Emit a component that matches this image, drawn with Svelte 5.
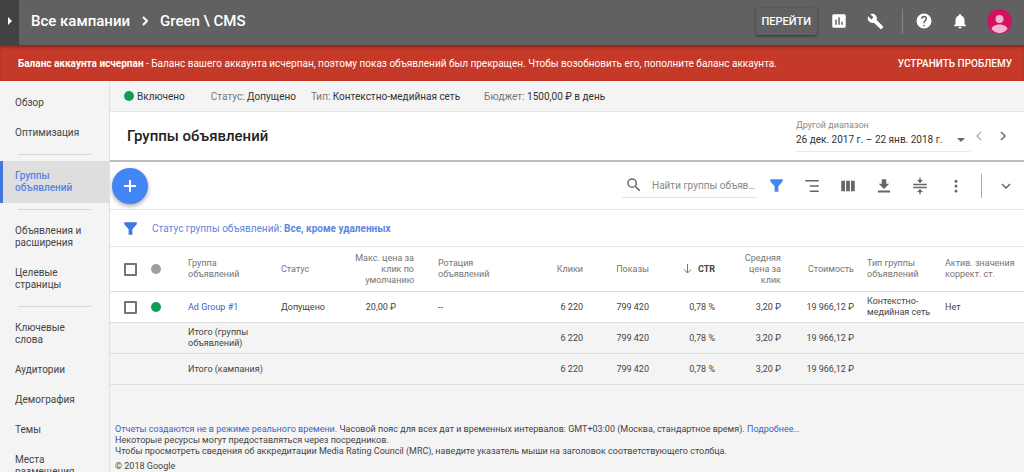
<script lang="ts">
  type NavItem = { label: string; active?: boolean };

  const navGroups: NavItem[][] = [
    [{ label: "Обзор" }, { label: "Оптимизация" }],
    [{ label: "Группы объявлений", active: true }],
    [{ label: "Объявления и расширения" }, { label: "Целевые страницы" }],
    [
      { label: "Ключевые слова" },
      { label: "Аудитории" },
      { label: "Демография" },
      { label: "Темы" },
      { label: "Места размещения" },
    ],
  ];

  const facts = [
    { label: "Статус:", value: "Допущено" },
    { label: "Тип:", value: "Контекстно-медийная сеть" },
    { label: "Бюджет:", value: "1500,00 ₽ в день" },
  ];

  const totals = ["Итого (группы объявлений)", "Итого (кампания)"];
  const stats = ["6 220", "799 420", "0,78 %", "3,20 ₽", "19 966,12 ₽"];

  const tools = [
    { label: "Сегменты", d: "M3 4h18v2H3zM9 11h12v2H9zM9 18h12v2H9z" },
    { label: "Столбцы", d: "M3 5h5v14H3zM9.5 5h5v14h-5zM16 5h5v14h-5z" },
    { label: "Скачать", d: "M19 9h-4V3H9v6H5l7 7zM4 18v2.500h16V18z" },
    { label: "Плотность", d: "M3 9h18v2H3zM3 13h18v2H3zM11 1h2v3h3l-4 4-4-4h3zM11 23h2v-3h3l-4-4-4 4h3z" },
    {
      label: "Ещё",
      d: "M12 7.500a2 2 0 1 0 0-4 2 2 0 0 0 0 4zm0 2.500a2 2 0 1 0 0 4 2 2 0 0 0 0-4zm0 6.500a2 2 0 1 0 0 4 2 2 0 0 0 0-4z",
    },
  ];

  const funnel = "M2 2h20v3l-7 8v9H9v-9L2 5z";

  let query = $state("");
  let allChecked = $state(false);
  let rowChecked = $state(false);
</script>

{#snippet icon(d: string, size = 18)}
  <svg width={size} height={size} viewBox="0 0 24 24" fill="currentColor" aria-hidden="true"><path {d} /></svg>
{/snippet}

<div class="page">
  <header class="top">
    <button type="button" class="drawer" aria-label="Открыть меню">
      <svg width="4" height="8" viewBox="0 0 4 8" fill="currentColor"><path d="M0 0l4 4-4 4z" /></svg>
    </button>
    <nav class="crumbs" aria-label="Путь">
      <a href="#campaigns">Все кампании</a>
      <svg width="6" height="10" viewBox="0 0 6 10" fill="none" stroke="currentColor" stroke-width="2"><path d="M1 1l4 4-4 4" /></svg>
      <a href="#green">Green \ CMS</a>
    </nav>
    <div class="actions">
      <button type="button" class="go">ПЕРЕЙТИ</button>
      <button type="button" class="ic" aria-label="Отчеты">
        {@render icon("M19 3H5a2 2 0 0 0-2 2v14a2 2 0 0 0 2 2h14a2 2 0 0 0 2-2V5a2 2 0 0 0-2-2zM9 17H7v-7h2zm4 0h-2V7h2zm4 0h-2v-4h2z")}
      </button>
      <button type="button" class="ic" aria-label="Инструменты">
        {@render icon("M22.700 19l-9.100-9.100c.9-2.300.4-5-1.500-6.900-2-2-5-2.400-7.400-1.300L9 6 6 9 1.600 4.700C.4 7.100.9 10.100 2.900 12.100c1.900 1.900 4.600 2.400 6.900 1.500l9.100 9.100c.4.4 1 .4 1.400 0l2.300-2.300c.5-.4.5-1.100.1-1.400z", 17)}
      </button>
      <span class="bar"></span>
      <button type="button" class="ic" aria-label="Справка">
        {@render icon("M12 2a10 10 0 1 0 0 20 10 10 0 0 0 0-20zm1 17h-2v-2h2zm2.070-7.750l-.9.920C13.450 12.900 13 13.500 13 15h-2v-.5c0-1.100.45-2.100 1.170-2.830l1.240-1.260c.37-.36.59-.86.59-1.410a2 2 0 1 0-4 0H8a4 4 0 1 1 8 0c0 .88-.36 1.680-.93 2.250z")}
      </button>
      <button type="button" class="ic" aria-label="Уведомления">
        {@render icon("M12 22a2 2 0 0 0 2-2h-4a2 2 0 0 0 2 2zm6-6v-5c0-3.070-1.640-5.640-4.500-6.320V4a1.500 1.500 0 0 0-3 0v.68C7.630 5.360 6 7.920 6 11v5l-2 2v1h16v-1z")}
      </button>
      <button type="button" class="avatar" aria-label="Аккаунт">
        <svg width="25" height="25" viewBox="0 0 25 25">
          <circle cx="12.500" cy="12.500" r="12.500" fill="#d0125f" />
          <circle cx="12.500" cy="10" r="4" fill="#f5b5d0" />
          <path d="M4.500 20c1-6 15-6 16 0-4 5.500-12 5.500-16 0z" fill="#f5b5d0" />
        </svg>
      </button>
    </div>
  </header>

  <div class="alert" role="alert">
    <p>
      <strong>Баланс аккаунта исчерпан</strong> - Баланс вашего аккаунта исчерпан, поэтому показ объявлений был прекращен. Чтобы возобновить его, пополните баланс аккаунта.
    </p>
    <button type="button">УСТРАНИТЬ ПРОБЛЕМУ</button>
  </div>

  <div class="body">
    <nav class="side" aria-label="Разделы">
      {#each navGroups as group, i (i)}
        {#if i > 0}<hr />{/if}
        {#each group as item (item.label)}
          <a href="#section" class:active={item.active}>{item.label}</a>
        {/each}
      {/each}
    </nav>

    <main>
      <div class="facts">
        <span class="state"><i class="dot on"></i>Включено</span>
        {#each facts as f (f.label)}
          <span class="fact">{f.label} <b>{f.value}</b></span>
        {/each}
      </div>

      <div class="title">
        <h1>Группы объявлений</h1>
        <button type="button" class="range">
          <span class="hint">Другой диапазон</span>
          <span class="dates">
            26 дек. 2017 г. – 22 янв. 2018 г.
            <svg width="8" height="4" viewBox="0 0 8 4" fill="#666"><path d="M0 0h8L4 4z" /></svg>
          </span>
        </button>
        <button type="button" class="step prev" aria-label="Предыдущий период">
          <svg width="6" height="10" viewBox="0 0 6 10"><path d="M5 1L1 5l4 4" /></svg>
        </button>
        <button type="button" class="step" aria-label="Следующий период">
          <svg width="6" height="10" viewBox="0 0 6 10"><path d="M1 1l4 4-4 4" /></svg>
        </button>
      </div>

      <div class="toolbar">
        <button type="button" class="fab" aria-label="Создать группу объявлений">
          <svg width="12" height="12" viewBox="0 0 12 12" stroke="currentColor" stroke-width="2"><path d="M6 0v12M0 6h12" /></svg>
        </button>
        <label class="search">
          {@render icon("M15.500 14h-.79l-.28-.27A6.470 6.470 0 0 0 16 9.500 6.500 6.500 0 1 0 9.500 16c1.610 0 3.090-.59 4.230-1.570l.27.28v.79l5 4.990L20.490 19zm-6 0a4.500 4.500 0 1 1 0-9 4.500 4.500 0 0 1 0 9z")}
          <input type="text" aria-label="Поиск" placeholder="Найти группы объяв…" bind:value={query} />
        </label>
        <button type="button" class="tool blue" aria-label="Фильтр">{@render icon(funnel, 15)}</button>
        {#each tools as t (t.label)}
          <button type="button" class="tool" aria-label={t.label}>{@render icon(t.d)}</button>
        {/each}
        <button type="button" class="collapse" aria-label="Свернуть">
          <svg width="10" height="6" viewBox="0 0 10 6"><path d="M1 1l4 4 4-4" /></svg>
        </button>
      </div>

      <div class="filter">
        {@render icon(funnel, 15)}
        <a href="#filter">Статус группы объявлений: <b>Все, кроме удаленных</b></a>
      </div>

      <table>
        <colgroup>
          <col class="w-check" /><col class="w-dot" /><col class="w-group" /><col class="w-status" />
          <col class="w-max" /><col class="w-rot" /><col class="w-num" /><col class="w-num" /><col class="w-num" />
          <col class="w-num" /><col class="w-cost" /><col class="w-type" /><col />
        </colgroup>
        <thead>
          <tr>
            <th class="check"><input type="checkbox" aria-label="Выбрать все" bind:checked={allChecked} /></th>
            <th class="mark"><i class="dot"></i></th>
            <th>Группа<br />объявлений</th>
            <th>Статус</th>
            <th class="num">Макс. цена за<br />клик по<br />умолчанию</th>
            <th class="rot">Ротация<br />объявлений</th>
            <th class="num">Клики</th>
            <th class="num">Показы</th>
            <th class="num sorted">
              <svg width="9" height="10" viewBox="0 0 9 10" fill="none" stroke="#777"><path d="M4.500 0v9M1 5.500L4.500 9 8 5.500" /></svg>
              CTR
            </th>
            <th class="num">Средняя<br />цена за<br />клик</th>
            <th class="num">Стоимость</th>
            <th class="pad">Тип группы<br />объявлений</th>
            <th class="pad">Актив. значения<br />коррект. ст.</th>
          </tr>
        </thead>
        <tbody>
          <tr>
            <td class="check"><input type="checkbox" aria-label="Выбрать Ad Group #1" bind:checked={rowChecked} /></td>
            <td class="mark"><i class="dot on"></i></td>
            <td><a href="#adgroup">Ad Group #1</a></td>
            <td>Допущено</td>
            <td class="num max">20,00 ₽</td>
            <td class="rot">--</td>
            {#each stats as s, i (i)}
              <td class="num">{s}</td>
            {/each}
            <td class="pad">Контекстно-<br />медийная сеть</td>
            <td class="pad">Нет</td>
          </tr>
          {#each totals as t (t)}
            <tr class="total">
              <td></td>
              <td></td>
              <td>{t}</td>
              <td></td>
              <td></td>
              <td></td>
              {#each stats as s, i (i)}
                <td class="num">{s}</td>
              {/each}
              <td></td>
              <td></td>
            </tr>
          {/each}
        </tbody>
      </table>

      <footer>
        <p>
          <a href="#reports">Отчеты создаются не в режиме реального времени.</a> Часовой пояс для всех дат и временных интервалов: GMT+03:00 (Москва, стандартное время). <a href="#more">Подробнее…</a>
        </p>
        <p>Некоторые ресурсы могут предоставляться через посредников.</p>
        <p>Чтобы просмотреть сведения об аккредитации Media Rating Council (MRC), наведите указатель мыши на заголовок соответствующего столбца.</p>
        <p class="copy">© 2018 Google</p>
      </footer>
    </main>
  </div>
</div>

<style>
  :global(body) {
    margin: 0;
  }
  .page {
    display: flex;
    flex-direction: column;
    height: 100vh;
    overflow: hidden;
    font-family: Roboto, "Liberation Sans", sans-serif;
    font-size: 10px;
    line-height: 11px;
    color: #444;
    background: #f4f4f4;
  }
  button {
    padding: 0;
    border: 0;
    background: none;
    font: inherit;
    color: inherit;
    text-align: left;
    cursor: pointer;
  }
  a {
    color: #3f62c4;
    text-decoration: none;
  }
  p {
    margin: 0;
  }
  svg {
    display: block;
    flex: none;
  }

  .top {
    display: flex;
    flex: none;
    height: 45px;
    color: #fff;
    background: #616161;
  }
  .drawer {
    width: 19px;
    padding: 0 0 3px 8px;
    background: #424242;
  }
  .crumbs {
    display: flex;
    flex: 1;
    align-items: center;
    gap: 12px;
    padding: 0 12px 3px;
    font-size: 15px;
    font-weight: 500;
    white-space: nowrap;
  }
  .crumbs a {
    color: inherit;
  }
  .actions {
    display: flex;
    align-items: center;
    padding: 0 12px 3px 0;
  }
  .go {
    height: 27px;
    padding: 0 6px;
    margin-right: 13px;
    border-radius: 2px;
    font-size: 11px;
    font-weight: 500;
    box-shadow: 0 1px 3px rgba(0, 0, 0, 0.5);
  }
  .ic {
    display: grid;
    place-items: center;
    width: 18px;
    margin-right: 18px;
  }
  .bar {
    width: 1px;
    height: 25px;
    margin-right: 12px;
    background: #858585;
  }

  .alert {
    display: flex;
    flex: none;
    align-items: center;
    justify-content: space-between;
    height: 36px;
    padding: 0 12px 0 18px;
    color: #fff;
    background: #c53929;
    box-shadow: inset 0 3px 3px -1px rgba(0, 0, 0, 0.35);
  }
  .alert strong {
    font-weight: 700;
  }
  .alert button {
    font-weight: 500;
  }

  .body {
    display: flex;
    flex: 1;
    min-height: 0;
  }
  .side {
    flex: none;
    box-sizing: border-box;
    width: 110px;
    padding-top: 7px;
    overflow: hidden;
    border-right: 1px solid #e0e0e0;
    line-height: 12px;
  }
  .side a {
    display: block;
    padding: 9px 18px 9px 15px;
    color: #444;
  }
  .side a.active {
    padding-left: 12px;
    border-left: 3px solid #4275e0;
    font-weight: 500;
    color: #5584e4;
    background: #dedede;
  }
  .side hr {
    height: 1px;
    margin: 6px 18px;
    border: 0;
    background: #d8d8d8;
  }

  main {
    flex: 1;
    min-width: 0;
    overflow: hidden;
  }
  .dot {
    display: block;
    flex: none;
    width: 10px;
    height: 10px;
    border-radius: 50%;
    background: #9e9e9e;
  }
  .dot.on {
    background: #0f9d58;
  }
  .facts {
    display: flex;
    align-items: center;
    box-sizing: border-box;
    height: 31px;
    padding-left: 14px;
    border-bottom: 1px solid #e4e4e4;
    color: #777;
    white-space: nowrap;
  }
  .facts b {
    font-weight: 400;
    color: #333;
  }
  .state {
    display: flex;
    align-items: center;
    gap: 3px;
    margin-right: 26px;
    color: #333;
  }
  .fact {
    margin-right: 15px;
  }
  .fact:last-child {
    margin-left: 9px;
  }

  .title {
    display: flex;
    align-items: center;
    box-sizing: border-box;
    height: 50px;
    padding: 0 18px 0 17px;
    border-bottom: 2px solid #bdbdbd;
    background: #fff;
  }
  h1 {
    flex: 1;
    margin: 0;
    font-size: 15px;
    font-weight: 500;
    line-height: 18px;
    color: #222;
  }
  .range {
    width: 174px;
    margin-right: 6px;
    border-bottom: 1px solid #e8e8e8;
  }
  .hint {
    display: block;
    font-size: 9px;
    color: #8a8a8a;
  }
  .dates {
    display: flex;
    align-items: center;
    justify-content: space-between;
    padding: 2px 5px 4px 0;
    line-height: 14px;
    color: #333;
    white-space: nowrap;
  }
  .step {
    width: 6px;
    margin-left: 18px;
  }
  .step.prev {
    margin-left: 0;
    opacity: 0.5;
  }
  .step path,
  .collapse path {
    fill: none;
    stroke: #666;
    stroke-width: 1.5;
  }

  .toolbar {
    display: flex;
    align-items: center;
    height: 47px;
    padding: 0 12px 0 2px;
    color: #666;
    background: #fff;
  }
  .fab {
    display: grid;
    place-items: center;
    width: 36px;
    height: 36px;
    margin-right: auto;
    border-radius: 50%;
    color: #fff;
    background: #4285f4;
    box-shadow: 0 2px 4px rgba(0, 0, 0, 0.35);
  }
  .search {
    display: flex;
    align-items: center;
    gap: 9px;
    box-sizing: border-box;
    width: 135px;
    height: 25px;
    padding-left: 3px;
    margin-right: 10px;
    border-bottom: 1px solid #e4e4e4;
  }
  .search input {
    flex: 1;
    min-width: 0;
    padding: 0;
    border: 0;
    outline: 0;
    font: inherit;
    color: #333;
    background: none;
  }
  .search input::placeholder {
    color: #888;
    opacity: 1;
  }
  .tool {
    display: grid;
    place-items: center;
    width: 18px;
    margin-right: 18px;
  }
  .tool.blue {
    color: #4285f4;
  }
  .tool:nth-last-child(2) {
    margin-right: 16px;
  }
  .collapse {
    display: flex;
    align-items: center;
    height: 24px;
    padding: 0 1px 0 19px;
    border-left: 1px solid #aaa;
  }

  .filter {
    display: flex;
    align-items: center;
    gap: 14px;
    box-sizing: border-box;
    height: 38px;
    padding-left: 13px;
    border: solid #e6e6e6;
    border-width: 1px 0;
    color: #4275e0;
    background: #fff;
  }
  .filter a {
    color: #5b87dc;
  }
  .filter b {
    font-weight: 700;
  }

  table {
    width: 100%;
    border-collapse: collapse;
    table-layout: fixed;
    font-size: 9px;
    background: #fff;
  }
  .w-check {
    width: 32px;
  }
  .w-dot {
    width: 46px;
  }
  .w-group {
    width: 93px;
  }
  .w-status {
    width: 59px;
  }
  .w-max {
    width: 74px;
  }
  .w-rot {
    width: 103px;
  }
  .w-num {
    width: 66px;
  }
  .w-cost {
    width: 73px;
  }
  .w-type {
    width: 78px;
  }
  th,
  td {
    height: 30px;
    padding: 0;
    border-bottom: 1px solid #dedede;
    font-weight: 400;
    text-align: left;
    vertical-align: middle;
  }
  th {
    height: 44px;
    color: #757575;
  }
  .total {
    background: #f4f4f4;
  }
  .check {
    padding-left: 14px;
  }
  .mark {
    padding-left: 9px;
  }
  .rot {
    padding-left: 24px;
  }
  .pad {
    padding-left: 13px;
    white-space: nowrap;
  }
  .num {
    text-align: right;
    white-space: nowrap;
  }
  .max {
    padding-right: 18px;
  }
  .sorted {
    font-weight: 700;
    color: #444;
  }
  .sorted svg {
    display: inline-block;
    margin-right: 4px;
    vertical-align: middle;
  }
  input[type="checkbox"] {
    display: block;
    appearance: none;
    box-sizing: border-box;
    width: 13px;
    height: 13px;
    margin: 0;
    border: 2px solid #757575;
    border-radius: 1px;
  }
  input[type="checkbox"]:checked {
    background: #4285f4;
    border-color: #4285f4;
  }

  footer {
    padding: 39px 0 0 5px;
    font-size: 9px;
    white-space: nowrap;
  }
  .copy {
    padding-top: 4px;
  }
</style>
